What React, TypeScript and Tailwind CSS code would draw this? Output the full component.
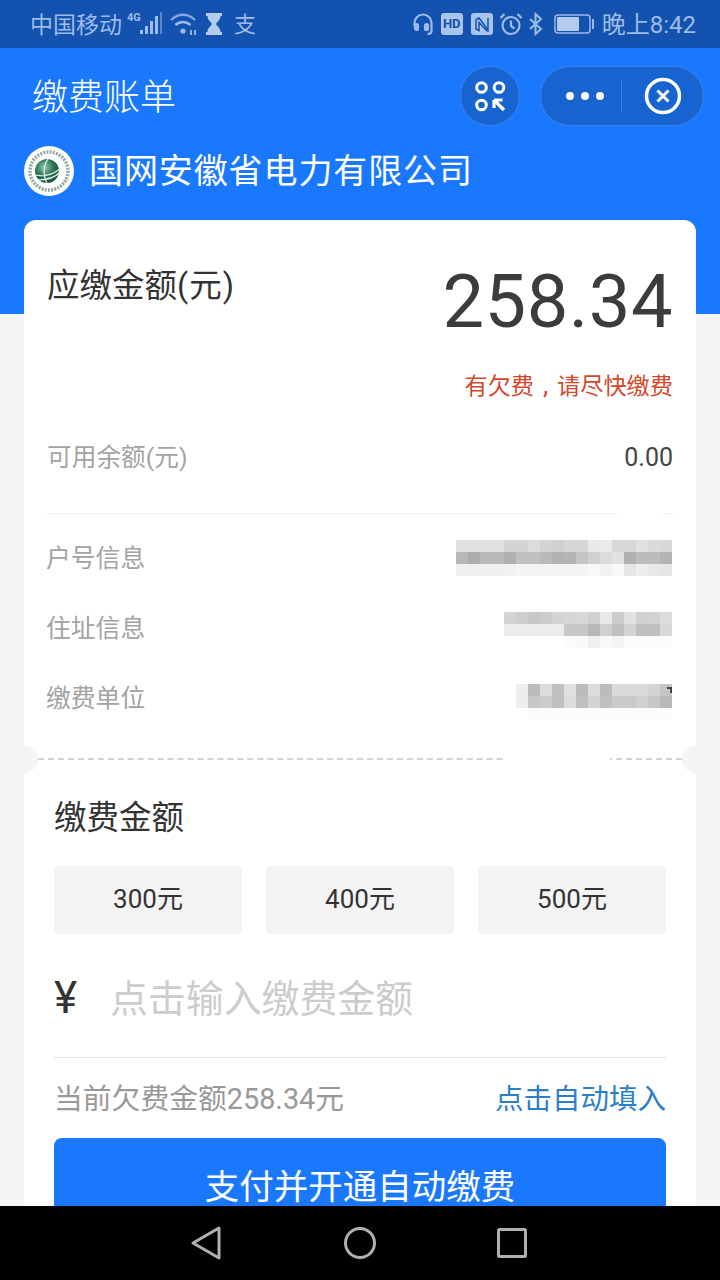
import React from 'react';

const cjk = "font-['Roboto','Noto_Sans_CJK_SC',sans-serif]";

// pixelated account details, one gray value per 12px cell
const mosaics: Record<string, string[]> = {
    account: [
        'e0 e0 e0 e0 d4 d4 dc d4 d0 d6 d6 e8 ea d8 d8 e2 da d8',
        'b8 ad ba ba b0 c0 c0 ba b2 b4 c4 d0 dc e2 b0 bc bc b4',
        'f0 f0 f0 f0 f2 f4 f4 f4 f4 f4 f4 f8 f2 f8 e6 ee e8 e6',
    ],
    address: [
        'd4 cf c8 cc d4 d6 d8 d0 e8 cc e2 d0 d2 dc',
        'ec ec ec ec ec c8 c8 b8 d0 c0 d4 c0 c0 d8',
        'ff ff ff ff ff fc fa f0 f8 f4 fc fc fc fc',
    ],
    unit: [
        'ee bc dc c0 e0 bc dc bc da da da d4 c4',
        'ee c8 cc c0 dc c0 d4 c0 ca ca d0 c8 b8',
        'ff fc fc fc fc fc fc fc fc fc fc fc fc',
    ],
};

const Mosaic: React.FC<{ rows: string[] }> = ({ rows }) => (
    <div className="flex flex-col">
        {rows.map((row, i) => (
            <div key={i} className="flex">
                {row.split(' ').map((c, j) => (
                    <div key={j} className="w-3 h-3" style={{ backgroundColor: `#${c}${c}${c}` }}></div>
                ))}
            </div>
        ))}
    </div>
);

const StatusBar: React.FC = () => (
    <div className={`h-12 shrink-0 bg-[#1352ae] flex items-center justify-between pl-[30px] pr-6 text-[#9dbbe8] ${cjk}`}>
        <div className="flex items-center">
            <span className="mt-[2px] text-[23px] leading-none">中国移动</span>
            <svg width="36" height="26" viewBox="0 0 36 26" className="ml-[5px]" fill="#9dbbe8">
                <text x="0" y="10" fontSize="11" fontWeight="700" fontFamily="Roboto">4G</text>
                <rect x="13" y="19" width="3" height="4" />
                <rect x="18" y="15" width="3" height="8" />
                <rect x="23" y="10" width="3" height="13" />
                <rect x="28" y="5" width="3" height="18" />
                <rect x="33" y="1" width="2" height="22" opacity="0.5" />
            </svg>
            <svg width="28" height="24" viewBox="0 0 28 24" className="ml-[7px]" fill="none" stroke="#9dbbe8" strokeWidth="2.4">
                <path d="M1 8c7-7 17-7 24 0" opacity="0.8" />
                <path d="M5.500 13c4.500-4 10.500-4 15 0" />
                <circle cx="13" cy="19" r="2.600" fill="#9dbbe8" stroke="none" />
                <path d="M21 23v-5 M25 23v-5" strokeWidth="1.800" />
            </svg>
            <svg width="18" height="22" viewBox="0 0 18 22" className="ml-[7px]" fill="#b4cbee">
                <path d="M1 0h16v3h-1.500c0 4-3.500 6-4.500 8 1 2 4.500 4 4.500 8H17v3H1v-3h1.500c0-4 3.500-6 4.500-8-1-2-4.500-4-4.500-8H1z" />
            </svg>
            <span className="ml-[11px] mt-[2px] text-[22px] leading-none">支</span>
        </div>
        <div className="flex items-center">
            <svg width="20" height="22" viewBox="0 0 20 22" fill="none" stroke="#9dbbe8" strokeWidth="2.200">
                <path d="M1.500 13V10a8.500 8.500 0 0 1 17 0v8c0 2-1 3-4 3" />
                <rect x="2" y="11" width="3" height="6" rx="1.500" fill="#9dbbe8" />
                <rect x="12" y="11" width="3" height="6" rx="1.500" fill="#9dbbe8" />
            </svg>
            <div className="ml-2 w-[22px] h-[22px] rounded-[3px] bg-[#a9c3ec] text-[#1352ae] text-[13px] font-bold leading-[22px] text-center">HD</div>
            <svg width="22" height="22" viewBox="0 0 22 22" className="ml-2">
                <rect width="22" height="22" rx="3" fill="#a9c3ec" />
                <path d="M5 6.500l3-1.500 9 12V5 M5 6.500V16l3 1.500V9.500l8 8.500 1-1" fill="none" stroke="#1352ae" strokeWidth="1.500" />
            </svg>
            <svg width="24" height="24" viewBox="0 0 24 24" className="ml-[6px]" fill="none" stroke="#9dbbe8" strokeWidth="2.200">
                <circle cx="12" cy="13.500" r="8.500" />
                <path d="M12 8.500v5.500l3.500 2.500 M1.500 6l4-4 M22.500 6l-4-4" />
            </svg>
            <svg width="14" height="24" viewBox="0 0 14 24" className="ml-[6px]" fill="none" stroke="#9dbbe8" strokeWidth="2">
                <path d="M1 7l11 10-5.500 5V2L12 7 1 17" />
            </svg>
            <svg width="40" height="20" viewBox="0 0 40 20" className="ml-[11px]">
                <rect x="1" y="1" width="35" height="18" rx="3" fill="none" stroke="#9dbbe8" strokeWidth="1.500" />
                <rect x="3" y="3" width="22" height="14" rx="1" fill="#b4cbee" />
                <rect x="38" y="5" width="2" height="10" fill="#9dbbe8" />
            </svg>
            <span className="ml-2 mt-[2px] text-[24px] leading-none">晚上8:42</span>
        </div>
    </div>
);

const Logo: React.FC = () => (
    <div className="w-[50px] h-[50px] rounded-full bg-white flex items-center justify-center">
        <svg width="44" height="44" viewBox="0 0 44 44" fill="none">
            <defs>
                <radialGradient id="globe" cx="0.4" cy="0.35" r="0.7">
                    <stop offset="0" stopColor="#9cc9b2" />
                    <stop offset="0.5" stopColor="#2f7a5a" />
                    <stop offset="1" stopColor="#0f4f3b" />
                </radialGradient>
            </defs>
            <circle cx="22" cy="22" r="19" stroke="#6f8c80" strokeWidth="3.500" strokeDasharray="2 1.200" opacity="0.75" />
            <circle cx="20" cy="22" r="12" fill="url(#globe)" />
            <path d="M8 26c8 2 18 0 26-7M10 31c8 0 18-2 23-8M21 10c-5 7-5 17-1 24" stroke="#eaf3ee" strokeWidth="1.200" />
        </svg>
    </div>
);

const Header: React.FC = () => (
    <div className={`h-[266px] shrink-0 bg-[#1a78ff] flex flex-col text-white ${cjk}`}>
        <div className="mt-[18px] h-[60px] flex items-center justify-between pl-[32px] pr-4">
            <span className="mt-1 text-[36px] leading-none font-light">缴费账单</span>
            <div className="flex items-center gap-5">
                <div className="w-[60px] h-[60px] rounded-full bg-[#1764d0] border border-[#3a83e8] flex items-center justify-center">
                    <svg width="36" height="36" viewBox="0 0 36 36" fill="none" stroke="#fff" strokeWidth="3">
                        <circle cx="9.500" cy="9.500" r="4.800" />
                        <circle cx="27" cy="9.500" r="4.800" />
                        <circle cx="9.500" cy="27" r="4.800" />
                        <path d="M22 22h8.500v0 M22 22v8 M22.500 22.500L32 32" strokeWidth="3.200" />
                    </svg>
                </div>
                <div className="w-[164px] h-[60px] rounded-full bg-[#1764d0] border border-[#3a83e8] flex items-center">
                    <div className="w-[80px] flex items-center justify-end gap-[7px] pr-[17px]">
                        <div className="w-2 h-2 rounded-full bg-white"></div>
                        <div className="w-2 h-2 rounded-full bg-white"></div>
                        <div className="w-2 h-2 rounded-full bg-white"></div>
                    </div>
                    <div className="w-px h-8 bg-[#3a83e8]"></div>
                    <div className="flex-1 flex items-center justify-center">
                        <svg width="38" height="38" viewBox="0 0 38 38" fill="none" stroke="#fff">
                            <circle cx="19" cy="19" r="16.500" strokeWidth="3.500" />
                            <path d="M13.500 13.500l11 11M24.500 13.500l-11 11" strokeWidth="3" />
                        </svg>
                    </div>
                </div>
            </div>
        </div>
        <div className="mt-5 flex items-center pl-6">
            <Logo />
            <span className="ml-[15px] text-[34px] tracking-[0.9px] leading-none">国网安徽省电力有限公司</span>
        </div>
    </div>
);

const InfoRow: React.FC<{ label: string; rows: string[]; offset: string; mark?: boolean }> = ({ label, rows, offset, mark }) => (
    <div className="h-[70px] flex items-center justify-between pl-[22px] pr-6">
        <span className="mt-1 text-[24.800px] text-[#a3a3a3] leading-none">{label}</span>
        <div className={`relative ${offset}`}>
            <Mosaic rows={rows} />
            {mark && <div className="absolute right-0 top-[3px] w-[5px] h-[6px] border-t-2 border-r-2 border-[#444]"></div>}
        </div>
    </div>
);

const Card: React.FC = () => (
    <div className={`-mt-[94px] mx-6 bg-white rounded-t-xl overflow-hidden ${cjk}`}>
        <div className="pt-11 flex justify-between pl-[23px] pr-[23px]">
            <span className="mt-[2px] text-[32.500px] leading-10 text-[#333]">应缴金额<span className="tracking-[1px]">(元)</span></span>
            <span className="mt-[2px] text-[74px] leading-[72px] tracking-[0.500px] text-[#3c3c3c]">258.34</span>
        </div>
        <div className="mt-[32px] pr-[23px] text-right text-[23.200px] leading-[30px] text-[#d4472a]">
            有欠费<span className="inline-block w-[23px] text-center text-[26px] leading-[30px]">,</span>请尽快缴费
        </div>
        <div className="mt-[41px] flex items-center justify-between pl-[23px] pr-[23px] h-[30px]">
            <span className="mt-[2px] text-[24.700px] text-[#a3a3a3]">可用余额(元)</span>
            <span className="mt-[2px] text-[25px] text-[#444]">0.00</span>
        </div>
        <div className="mt-[41px] mx-[22px] h-px bg-[#eeeeee] relative">
            <div className="absolute right-[12px] -top-[1px] w-[44px] h-[3px] bg-white"></div>
        </div>
        <div className="mt-2">
            <InfoRow label="户号信息" rows={mosaics.account} offset="mt-[2px]" />
            <InfoRow label="住址信息" rows={mosaics.address} offset="mt-[6px]" />
            <InfoRow label="缴费单位" rows={mosaics.unit} offset="mt-[10px]" mark />
        </div>
        <div className="mt-[26px] relative h-0.5 border-t-2 border-dashed border-[#d4d4d4] mx-[14px]">
            <div className="absolute left-[467px] -top-[3px] w-[105px] h-[4px] bg-white"></div>
            <div className="absolute -left-7 -top-[15px] w-7 h-7 rounded-full bg-[#f5f5f5]"></div>
            <div className="absolute -right-7 -top-[15px] w-7 h-7 rounded-full bg-[#f5f5f5]"></div>
        </div>
        <div className="px-[30px] pt-[35px] pb-10">
            <div className="pt-[2px] text-[32.500px] leading-[42px] text-[#333]">缴费金额</div>
            <div className="mt-[27px] grid grid-cols-3 gap-6">
                {['300元', '400元', '500元'].map((t) => (
                    <div key={t} className="h-[68px] pb-[2px] bg-[#f4f4f4] rounded-sm flex items-center justify-center text-[26px] text-[#333]">{t}</div>
                ))}
            </div>
            <div className="mt-[34px] h-[60px] flex items-center">
                <span className="w-14 text-[44px] leading-none text-[#333]">¥</span>
                <span className="mt-1 text-[37.900px] leading-none text-[#cccccc]">点击输入缴费金额</span>
            </div>
            <div className="mt-[29px] h-px bg-[#e5e5e5]"></div>
            <div className="mt-5 h-10 pt-1 flex items-center justify-between">
                <span className="text-[28.800px] text-[#999]">当前欠费金额258.34元</span>
                <span className="text-[28.500px] text-[#2b7fc9]">点击自动填入</span>
            </div>
            <div className="mt-5 h-24 pt-[2px] rounded-lg bg-[#1a78ff] flex items-center justify-center text-white text-[34.500px] leading-none">支付并开通自动缴费</div>
        </div>
    </div>
);

const NavBar: React.FC = () => (
    <div className="h-[74px] shrink-0 bg-black flex items-center pl-[190px]">
        <svg width="32" height="36" viewBox="0 0 32 36" fill="none" stroke="#b0b0b0" strokeWidth="3" strokeLinejoin="round">
            <path d="M29 3L3 18l26 15z" />
        </svg>
        <svg width="32" height="32" viewBox="0 0 32 32" className="ml-[122px]" fill="none" stroke="#b0b0b0" strokeWidth="3">
            <circle cx="16" cy="16" r="14.500" />
        </svg>
        <svg width="30" height="30" viewBox="0 0 30 30" className="ml-[121px]" fill="none" stroke="#b0b0b0" strokeWidth="3" strokeLinejoin="round">
            <rect x="1.500" y="1.500" width="27" height="27" rx="1" />
        </svg>
    </div>
);

export default function App() {
    return (
        <div className="w-[720px] h-[1280px] flex flex-col overflow-hidden bg-[#f5f5f5]">
            <StatusBar />
            <div className="flex-1 min-h-0 overflow-hidden">
                <Header />
                <Card />
            </div>
            <NavBar />
        </div>
    );
}
